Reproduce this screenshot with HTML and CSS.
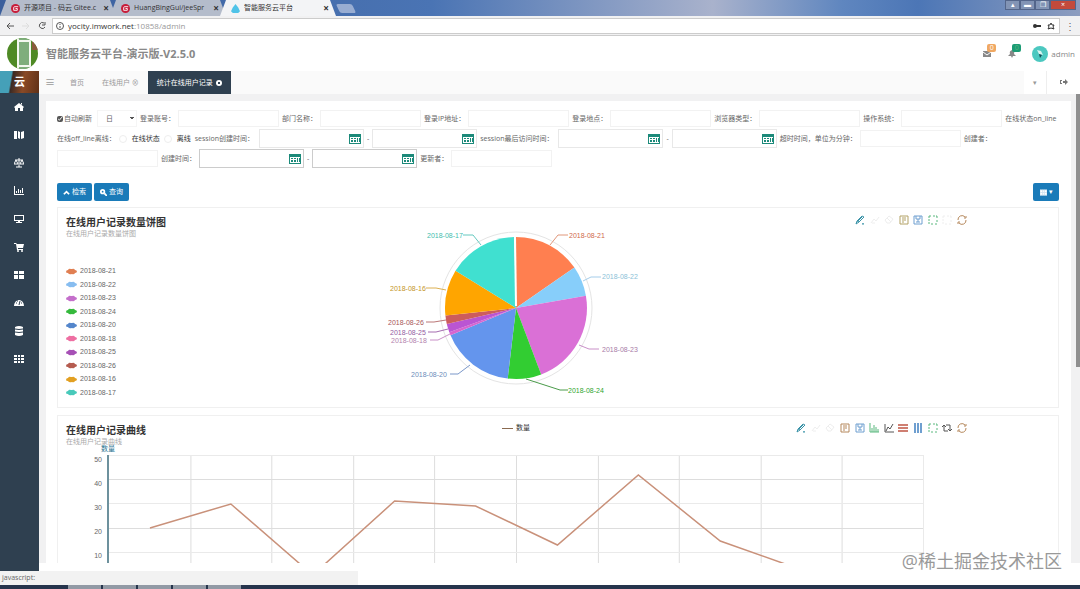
FILE: index.html
```html
<!DOCTYPE html>
<html lang="zh-CN">
<head>
    <meta charset="utf-8">
    <title>智能服务云平台</title>
    <link rel="stylesheet" href="styles.css">
</head>
<body>
    <svg class="defs" aria-hidden="true">
        <symbol id="i-pen" viewBox="0 0 10 10"><path d="M1 9l1-3 5-5 2 1-5 5zM2 6l2 1M3 6l4-4M7 9h2M8 8v1" /></symbol>
        <symbol id="i-undo" viewBox="0 0 10 10"><path d="M1 8l3-4 2 2 3-4M2 8h3" /></symbol>
        <symbol id="i-clear" viewBox="0 0 10 10"><path d="M1 5l4-4 4 3-3 4H3zM3 3l4 4" /></symbol>
        <symbol id="i-data" viewBox="0 0 10 10"><path d="M1 1h8v8H1zM3 3h4M3 5h4M3 7h2" /></symbol>
        <symbol id="i-save" viewBox="0 0 10 10"><path d="M1 1h8v8H1zM3 1v3h4V1M5 4v3M3 7h4" /></symbol>
        <symbol id="i-box" viewBox="0 0 10 10"><path d="M1 3V1h2M5 1h2M8 1h1v2M9 5v2M9 9H7M5 9H3M1 9V7M1 6V4" /></symbol>
        <symbol id="i-refresh" viewBox="0 0 10 10"><path d="M1 5a4 4 0 0 1 7-3M9 1v2H7M9 5a4 4 0 0 1-7 3M1 9V7h2" /></symbol>
        <symbol id="i-bar" viewBox="0 0 10 10"><path d="M1 0v9h9M3 9V5M5 9V2M7 9V4M9 9V6" /></symbol>
        <symbol id="i-line" viewBox="0 0 10 10"><path d="M1 1v8h9M2 8l2-4 2 2 3-5" /></symbol>
        <symbol id="i-rows" viewBox="0 0 10 10"><path d="M0 2h10M0 5h10M0 8h10" stroke-width="2" /></symbol>
        <symbol id="i-cols" viewBox="0 0 10 10"><path d="M2 0v10M5 0v10M8 0v10" stroke-width="2" /></symbol>
        <symbol id="i-swap" viewBox="0 0 10 10"><path d="M4 2h4v5M6 6l2 2 2-2M6 8H2V3M0 4l2-2 2 2" /></symbol>
        <symbol id="i-cal" viewBox="0 0 12 10"><path fill="#1c8a7a" d="M0 0h12v10H0z" /><path fill="#fff" d="M1 3h10v6H1z" /><path fill="#1c8a7a" d="M2 4h2v1H2zM5 4h2v1H5zM8 4h1v4H8zM2 6h2v2H2zM5 6h2v2H5zM10 4h1v4h-1z" /></symbol>
        <symbol id="i-gitee" viewBox="0 0 10 10"><circle cx="5" cy="5" r="5" fill="#c71d3a" /><path d="M8 3H4Q3 3 3 4v3h4V5H5" fill="none" stroke="#fff" /></symbol>
        <symbol id="i-car" viewBox="0 0 11 7"><path d="M0 4q0-2 2-2 1-2 3-1l1 0q2-1 3 1 2 0 2 2-1 1-2 1-1 2-3 1-3 1-4-1-2 0-2-1z" /></symbol>
    </svg>

    <div class="browser-tabs">
        <a class="browser-tab" href="#"><svg><use href="#i-gitee" /></svg><span>开源项目 - 码云 Gitee.c</span><b>×</b></a>
        <a class="browser-tab" href="#"><svg><use href="#i-gitee" /></svg><span>HuangBingGui/jeeSpr</span><b>×</b></a>
        <a class="browser-tab current" href="#"><svg viewBox="0 0 10 10"><path fill="#4fc3e8" d="M5 0l3 4 2 4-2 2H2L0 8l2-4z" /></svg><span>智能服务云平台</span><b>×</b></a>
        <i class="new-tab"></i>
        <div class="window-buttons">
            <button aria-label="用户">▴</button><button aria-label="最小化">▬</button><button aria-label="还原">❐</button><button class="close" aria-label="关闭">×</button>
        </div>
    </div>
    <div class="address-bar">
        <svg class="nav-icons" viewBox="0 0 50 14" fill="none" stroke="#555">
            <path d="M14 7H7M10 4L7 7l3 3" />
            <path stroke="#ddd" d="M22 7h7M26 4l3 3-3 3" />
            <path d="M44 4a3 3 0 1 0 1 4M45 3v3h-3" />
        </svg>
        <div class="url">
            <svg viewBox="0 0 8 8" fill="none" stroke="#555"><circle cx="4" cy="4" r="3.5" /><path d="M4 2v1M4 4v2" /></svg>
            <span>yocity.imwork.net<em>:10858/admin</em></span>
            <svg class="key" viewBox="0 0 8 8" fill="none" stroke="#333" stroke-width="2"><circle cx="2" cy="4" r="1" /><path d="M3 4h5" /></svg>
            <svg viewBox="0 0 8 8" fill="none" stroke="#333"><path d="M4 1l1 2h2L6 5l1 2-3-1-3 1 1-2-1-2h2z" /></svg>
        </div>
        <span class="dots">⋮</span>
    </div>

    <header>
        <svg class="logo" viewBox="0 0 31 31">
            <clipPath id="round"><circle cx="15.5" cy="15.5" r="15.5" /></clipPath>
            <g clip-path="url(#round)">
                <path fill="#4f8a25" d="M0 0h31v31H0z" />
                <path fill="#7fae7c" d="M12 0h12v31H12z" />
                <path fill="#8a5a3c" d="M25 0h6v12h-6z" />
                <path stroke="#f4f8f0" stroke-width="2" d="M11 0v31M23 0v31M11 3h12M11 28h12" />
            </g>
        </svg>
        <h1>智能服务云平台-演示版-V2.5.0</h1>
        <a class="notice" href="#" aria-label="消息">
            <svg viewBox="0 0 10 8"><path fill="#888" d="M1 1h8v6H1z" /><path stroke="#fff" fill="none" d="M1 2l4 3 4-3" /></svg>
            <span class="badge">0</span>
        </a>
        <a class="notice" href="#" aria-label="提醒">
            <svg viewBox="0 0 10 8"><path fill="#888" d="M5 0q3 1 2 4l2 2H6L5 8 4 6H1l2-2Q2 1 5 0z" /></svg>
            <span class="badge green">0</span>
        </a>
        <a class="user" href="#">
            <svg viewBox="0 0 16 16"><circle cx="8" cy="8" r="8" fill="#4cc8c0" /><path fill="#d9f4f0" d="M5 4l4 1 2 4-4-1z" /><path fill="#174a55" d="M7 8l3 1-2 3z" /></svg>
            admin
        </a>
    </header>

    <div class="main">
        <aside>
            <div class="brand">云</div>
            <nav>
                <a href="#" aria-label="主页"><svg viewBox="0 0 10 10"><path d="M5 1l5 4-1 1v3H6V6H4v3H1V6L0 5zM7 1h1v2L7 2z" /></svg></a>
                <a href="#" aria-label="地图"><svg viewBox="0 0 10 10"><path d="M0 1l3 0v8l-3 0zM4 1l2 1v7L4 8zM7 2l3-1v7L7 9z" /></svg></a>
                <a href="#" aria-label="权限"><svg viewBox="0 0 10 10"><path fill="none" stroke="#fff" d="M5 0v9M2 9h6M1 2h8M2 2L0 6h4zM8 2L6 6h4z" /></svg></a>
                <a href="#" aria-label="统计"><svg viewBox="0 0 10 10"><path d="M0 0h1v8h9v1H0zM2 5h1v2H2zM4 3h1v4H4zM6 4h1v3H6zM8 2h1v5H8z" /></svg></a>
                <a href="#" aria-label="监控"><svg viewBox="0 0 10 10"><path d="M0 1h10v6H6v1h2v1H2V8h2V7H0z" /><path fill="#2f4050" d="M1 2h8v4H1z" /></svg></a>
                <a href="#" aria-label="购物"><svg viewBox="0 0 10 10"><path d="M0 1h2l1 1h7L9 6H4v1h5v1H3L2 2H0z" /><circle cx="4" cy="9" r="1" /><circle cx="8" cy="9" r="1" /></svg></a>
                <a href="#" aria-label="组件"><svg viewBox="0 0 10 10"><path d="M0 1h4v3H0zM5 1h5v3H5zM0 5h4v4H0zM5 5h5v4H5z" /></svg></a>
                <a href="#" aria-label="仪表"><svg viewBox="0 0 10 10"><path d="M0 8a5 6 0 1 1 10 0z" /><path stroke="#2f4050" d="M5 7l1-4M2 5h1M7 5h1M3 3h1" /></svg></a>
                <a href="#" aria-label="数据"><svg viewBox="0 0 10 10"><path d="M1 1q4-2 8 0v8q-4 2-8 0z" /><path stroke="#2f4050" fill="none" d="M1 3q4 1 8 0M1 6q4 1 8 0" /></svg></a>
                <a href="#" aria-label="表格"><svg viewBox="0 0 10 10"><path d="M0 1h3v2H0zM4 1h2v2H4zM7 1h3v2H7zM0 4h3v2H0zM4 4h2v2H4zM7 4h3v2H7zM0 7h3v2H0zM4 7h2v2H4zM7 7h3v2H7z" /></svg></a>
            </nav>
        </aside>

        <div class="page">
            <div class="page-tabs">
                <button class="bars" aria-label="菜单">≡</button>
                <a href="#">首页</a>
                <a href="#">在线用户 ⊗</a>
                <a class="active" href="#">统计在线用户记录 <svg viewBox="0 0 6 6"><circle cx="3" cy="3" r="3" fill="#fff" /><path stroke="#2f4050" d="M2 2l2 2M4 2L2 4" /></svg></a>
                <button class="tab-tool" aria-label="更多">▾</button>
                <button class="tab-tool exit" aria-label="退出"><svg viewBox="0 0 8 6"><path fill="#777" d="M0 1h2v1H1v2h1v1H0zM3 2h2V0l3 3-3 3V4H3z" /></svg></button>
            </div>

            <div class="content">
                <div class="box">
                    <form>
                        <div class="row">
                            <label class="auto"><input type="checkbox" checked>自动刷新</label>
                            <select aria-label="周期"><option>日</option></select>
                            <label for="account">登录账号：</label><input type="text" id="account">
                            <label for="dept">部门名称：</label><input type="text" id="dept">
                            <label for="ip">登录IP地址：</label><input type="text" id="ip">
                            <label for="place">登录地点：</label><input type="text" id="place">
                            <label for="agent">浏览器类型：</label><input type="text" id="agent">
                            <label for="os">操作系统：</label><input type="text" id="os">
                            <span>在线状态on_line</span>
                        </div>
                        <div class="row">
                            <span>在线off_line离线：</span>
                            <label class="radio"><input type="radio" name="state">在线状态</label>
                            <label class="radio"><input type="radio" name="state">离线</label>
                            <label for="made">session创建时间：</label>
                            <span class="date"><input type="text" id="made"><svg><use href="#i-cal" /></svg></span>-<span class="date"><input type="text" aria-label="session创建时间止"><svg><use href="#i-cal" /></svg></span>
                            <label for="last">session最后访问时间：</label>
                            <span class="date"><input type="text" id="last"><svg><use href="#i-cal" /></svg></span>-<span class="date"><input type="text" aria-label="session最后访问时间止"><svg><use href="#i-cal" /></svg></span>
                            <label for="timeout">超时时间，单位为分钟：</label><input type="text" id="timeout">
                            <label for="creator">创建者：</label>
                        </div>
                        <div class="row">
                            <input type="text" id="creator">
                            <label for="created">创建时间：</label>
                            <span class="date dark"><input type="text" id="created"><svg><use href="#i-cal" /></svg></span>-<span class="date dark"><input type="text" aria-label="创建时间止"><svg><use href="#i-cal" /></svg></span>
                            <label for="updater">更新者：</label><input type="text" id="updater">
                        </div>
                        <div class="buttons">
                            <button type="button"><svg viewBox="0 0 8 8"><path d="M1 6l3-3 3 3" /></svg>检索</button>
                            <button type="button"><svg viewBox="0 0 8 8"><circle cx="3" cy="3" r="2" /><path d="M5 5l3 3" /></svg>查询</button>
                            <button type="button" class="columns" aria-label="列"><svg viewBox="0 0 8 8"><path d="M0 1h8v6H0zM0 4h8M3 1v6M5 1v6" /></svg>▾</button>
                        </div>
                    </form>

                    <section class="panel">
                        <div class="chart">
                            <h2>在线用户记录数量饼图</h2>
                            <p>在线用户记录数量饼图</p>
                            <div class="toolbox">
                                <svg class="teal"><use href="#i-pen" /></svg>
                                <svg class="off"><use href="#i-undo" /></svg>
                                <svg class="off"><use href="#i-clear" /></svg>
                                <svg class="olive"><use href="#i-data" /></svg>
                                <svg class="blue"><use href="#i-save" /></svg>
                                <svg class="green"><use href="#i-box" /></svg>
                                <svg class="off"><use href="#i-box" /></svg>
                                <svg class="brown"><use href="#i-refresh" /></svg>
                            </div>
                            <ul class="legend">
                                <li><svg fill="#e07f52"><use href="#i-car" /></svg>2018-08-21</li>
                                <li><svg fill="#87bdf0"><use href="#i-car" /></svg>2018-08-22</li>
                                <li><svg fill="#c46fcb"><use href="#i-car" /></svg>2018-08-23</li>
                                <li><svg fill="#35b93c"><use href="#i-car" /></svg>2018-08-24</li>
                                <li><svg fill="#5486cb"><use href="#i-car" /></svg>2018-08-20</li>
                                <li><svg fill="#ee6fa2"><use href="#i-car" /></svg>2018-08-18</li>
                                <li><svg fill="#a650b5"><use href="#i-car" /></svg>2018-08-25</li>
                                <li><svg fill="#b55c50"><use href="#i-car" /></svg>2018-08-26</li>
                                <li><svg fill="#e2a022"><use href="#i-car" /></svg>2018-08-16</li>
                                <li><svg fill="#48c9ba"><use href="#i-car" /></svg>2018-08-17</li>
                            </ul>
                            <svg class="pie" viewBox="0 0 300 190">
                                <circle cx="150" cy="100" r="76" fill="none" stroke="#e4e4e4" />
                                <path fill="#ff7f50" d="M150 100V29A71 71 0 0 1 208.4 59.6z" />
                                <path fill="#87cefa" d="M150 100L208.4 59.6A71 71 0 0 1 219.9 87.7z" />
                                <path fill="#da70d6" d="M150 100L219.9 87.7A71 71 0 0 1 175.2 166.4z" />
                                <path fill="#32cd32" d="M150 100L175.2 166.4A71 71 0 0 1 141.7 170.5z" />
                                <path fill="#6495ed" d="M150 100L141.7 170.5A71 71 0 0 1 84.5 127.3z" />
                                <path fill="#d765cf" d="M150 100L84.5 127.3A71 71 0 0 1 83.3 124.3z" />
                                <path fill="#ba55d3" d="M150 100L83.3 124.3A71 71 0 0 1 80.8 116z" />
                                <path fill="#cd5c5c" d="M150 100L80.8 116A71 71 0 0 1 79.4 107.4z" />
                                <path fill="#ffa500" d="M150 100L79.4 107.4A71 71 0 0 1 89.5 62.8z" />
                                <path fill="#40e0d0" d="M150 100L89.5 62.8A71 71 0 0 1 148.2 29z" />
                                <path stroke="#fff" stroke-width="2" d="M149 29L150 98" />
                                <g fill="none">
                                    <path stroke="#e0977b" d="M184 37l8-10h10" />
                                    <path stroke="#a5cdea" d="M217 73l8-4h10" />
                                    <path stroke="#c990c8" d="M213 137l10 4h10" />
                                    <path stroke="#4b9c4b" d="M160 171l34 11h8" />
                                    <path stroke="#7b97c9" d="M104 157l-12 9h-8" />
                                    <path stroke="#c990c8" d="M84 126l-12 6h-8" />
                                    <path stroke="#a56db0" d="M82 121l-12 3h-8" />
                                    <path stroke="#b77" d="M80 112l-12 2h-8" />
                                    <path stroke="#dcb052" d="M80 82l-10-2H60" />
                                    <path stroke="#66c9bf" d="M115 37l-8-10H97" />
                                </g>
                                <g>
                                    <text x="203" y="30" fill="#d0694a">2018-08-21</text>
                                    <text x="236" y="71" fill="#8bbfd8">2018-08-22</text>
                                    <text x="236" y="144" fill="#a87ba8">2018-08-23</text>
                                    <text x="202" y="185" fill="#2fa52f">2018-08-24</text>
                                    <text x="45" y="169" fill="#6c8cba">2018-08-20</text>
                                    <text x="25" y="135" fill="#b37fae">2018-08-18</text>
                                    <text x="24" y="127" fill="#935d9f">2018-08-25</text>
                                    <text x="22" y="117" fill="#a85656">2018-08-26</text>
                                    <text x="24" y="83" fill="#c49526">2018-08-16</text>
                                    <text x="61" y="30" fill="#43bdae">2018-08-17</text>
                                </g>
                            </svg>
                        </div>
                    </section>

                    <section class="panel">
                        <div class="chart">
                            <h2>在线用户记录曲线</h2>
                            <p>在线用户记录曲线</p>
                            <div class="line-legend"><i></i>数量</div>
                            <div class="toolbox wide">
                                <svg class="teal"><use href="#i-pen" /></svg>
                                <svg class="off"><use href="#i-undo" /></svg>
                                <svg class="off"><use href="#i-clear" /></svg>
                                <svg class="brown"><use href="#i-data" /></svg>
                                <svg class="blue"><use href="#i-save" /></svg>
                                <svg class="green"><use href="#i-bar" /></svg>
                                <svg class="black"><use href="#i-line" /></svg>
                                <svg class="red"><use href="#i-rows" /></svg>
                                <svg class="blue"><use href="#i-cols" /></svg>
                                <svg class="green"><use href="#i-box" /></svg>
                                <svg class="black"><use href="#i-swap" /></svg>
                                <svg class="brown"><use href="#i-refresh" /></svg>
                            </div>
                            <div class="plot">
                                <b class="axis-name">数量</b>
                                <div class="y-axis"><span>50</span><span>40</span><span>30</span><span>20</span><span>10</span></div>
                                <svg viewBox="0 0 816 122" preserveAspectRatio="none">
                                    <path stroke="#ddd" d="M0 24.5h816M0 73.5h816M82 0v122M163 0v122M245 0v122M326 0v122M408 0v122M490 0v122M571 0v122M653 0v122M734 0v122" />
                                    <path stroke="#eaeaea" d="M0 .5h816M0 48.5h816M0 97.5h816M815.5 0v122" />
                                    <path stroke="#c9917a" stroke-width="1.5" d="M41 73L122 49 204 120 286 46 367 51 449 90 530 20 612 86 694 115 775 120" />
                                </svg>
                            </div>
                        </div>
                    </section>
                </div>
                <i class="scrollbar"></i>
            </div>
        </div>
    </div>
    <footer><span>javascript:</span></footer>
    <div class="taskbar"><i></i><i></i><i></i><i></i><i></i></div>
    <div class="watermark">@稀土掘金技术社区</div>
</body>
</html>
```
FILE: styles.css
```css
* {
    box-sizing: border-box;
}

body {
    display: flex;
    flex-direction: column;
    height: 100vh;
    margin: 0;
    overflow: hidden;
    font-family: "Open Sans", "Noto Sans CJK SC", sans-serif;
    font-size: 7px;
    line-height: 10px;
    color: #666;
    background: #fff;
}

a {
    color: inherit;
    text-decoration: none;
}

button, input, select {
    font: inherit;
    color: inherit;
    margin: 0;
    padding: 0;
    border: none;
    background: none;
}

svg {
    flex: none;
}

.defs {
    position: absolute;
    width: 0;
    height: 0;
}

/* browser window */
.browser-tabs {
    display: flex;
    flex: none;
    height: 16px;
    background: linear-gradient(to right, #3b5f9c, #4a74b4 40%, #a9b2cc 66%, #5f86bf 78%, #4c76b6 85%, #8d9dbf);
}

.browser-tab {
    display: flex;
    align-items: center;
    gap: 4px;
    width: 116px;
    margin-right: -6px;
    padding: 0 7px 0 11px;
    color: #333;
    background: #b4bccb;
    clip-path: polygon(6px 0, 110px 0, 100% 100%, 0 100%);
}

.browser-tab.current {
    background: #f3f4f6;
}

.browser-tab svg {
    width: 9px;
    height: 9px;
}

.browser-tab span {
    flex: 1;
    overflow: hidden;
    white-space: nowrap;
}

.browser-tab b {
    font-size: 10px;
}

.new-tab {
    width: 16px;
    height: 9px;
    margin: 4px 0 0 8px;
    background: #98add2;
    border-radius: 2px;
    transform: skewX(25deg);
}

.window-buttons {
    display: flex;
    height: 10px;
    margin-left: auto;
    margin-right: 4px;
    color: #fff;
}

.window-buttons button {
    width: 15px;
    line-height: 8px;
    background: #8294b5;
    border: 1px solid #53658a;
}

.window-buttons .close {
    width: 26px;
    background: #c34a3c;
}

.address-bar {
    display: flex;
    align-items: center;
    flex: none;
    height: 20px;
    background: #f1f1f2;
    border-bottom: 1px solid #ccc;
}

.nav-icons {
    width: 50px;
    height: 14px;
}

.url {
    display: flex;
    align-items: center;
    flex: 1;
    gap: 4px;
    height: 16px;
    margin-left: 2px;
    padding: 0 4px 0 3px;
    font-size: 8px;
    color: #333;
    background: #fff;
    border: 1px solid #ccc;
}

.url svg {
    width: 8px;
    height: 8px;
}

.url .key {
    margin-left: auto;
    margin-right: 2px;
}

.url em {
    font-style: normal;
    color: #999;
}

.dots {
    width: 20px;
    font-size: 10px;
    text-align: center;
}

/* page header */
header {
    display: flex;
    align-items: center;
    flex: none;
    height: 35px;
    padding: 0 5px 0 7px;
}

.logo {
    width: 31px;
    height: 31px;
}

h1 {
    flex: 1;
    margin: 0 0 0 8px;
    font-size: 11px;
    line-height: 16px;
    color: #888;
}

.notice {
    position: relative;
    width: 25px;
    height: 8px;
}

.notice svg {
    display: block;
    width: 10px;
    height: 8px;
}

.badge {
    position: absolute;
    left: 5px;
    top: -6px;
    width: 9px;
    height: 8px;
    line-height: 8px;
    text-align: center;
    color: #fff;
    background: #f0a862;
    border-radius: 2px;
}

.badge.green {
    background: #1c9c75;
}

.user {
    display: flex;
    align-items: center;
    gap: 3px;
    font-size: 8px;
    color: #888;
}

.user svg {
    width: 16px;
    height: 16px;
}

.main {
    display: flex;
    flex: 1;
    min-height: 0;
}

aside {
    width: 39px;
    background: #2f4050;
}

.brand {
    height: 22px;
    font-size: 11px;
    font-weight: bold;
    line-height: 22px;
    text-align: center;
    color: #fff;
    background: linear-gradient(100deg, #45a0b8 28%, #3b2a24 32%, #8a4a26 60%, #5f3017);
}

aside nav a {
    display: flex;
    align-items: center;
    justify-content: center;
    height: 28px;
    padding-right: 2px;
}

aside nav svg {
    width: 10px;
    height: 10px;
    fill: #fff;
}

.page {
    display: flex;
    flex: 1;
    flex-direction: column;
    min-width: 0;
    padding-bottom: 8px;
}

.page-tabs {
    display: flex;
    flex: none;
    height: 23px;
    line-height: 23px;
    color: #999;
    background: #fafafa;
}

.page-tabs .bars {
    width: 22px;
    font-size: 10px;
}

.page-tabs a {
    padding: 0 9px;
}

.page-tabs .active {
    display: flex;
    align-items: center;
    gap: 3px;
    color: #fff;
    background: #2f4050;
}

.page-tabs .active svg {
    width: 6px;
    height: 6px;
}

.tab-tool {
    width: 22px;
    margin-left: auto;
    background: #fff;
}

.tab-tool.exit {
    width: 34px;
    margin-left: 0;
    border-left: 1px solid #eee;
}

.tab-tool svg {
    width: 8px;
    height: 6px;
}

.content {
    display: flex;
    align-items: flex-start;
    flex: 1;
    min-height: 0;
    overflow: hidden;
    background: #f1f1f2;
}

.box {
    flex: 1;
    min-width: 0;
    margin: 7px 5px 0 7px;
    padding: 8px 12px 0 11px;
    background: #fff;
}

.scrollbar {
    width: 4px;
    height: 273px;
    background: #8f8f8f;
}

/* search form */
.row {
    display: flex;
    align-items: center;
    gap: 3px;
    height: 19px;
    margin-bottom: 1px;
    white-space: nowrap;
}

.row input[type="text"] {
    width: 101px;
    height: 17px;
    background: #fff;
    border: 1px solid #f2f2f2;
}

.row select {
    width: 40px;
    height: 17px;
    padding-left: 8px;
    appearance: none;
    border: 1px solid #f5f5f5;
    background: linear-gradient(45deg, transparent 50%, #555 50%) 32px 6px / 2px 3px no-repeat,
        linear-gradient(-45deg, transparent 50%, #555 50%) 34px 6px / 2px 3px no-repeat;
}

.auto, .radio {
    display: flex;
    align-items: center;
    gap: 1px;
}

.auto input {
    width: 6px;
    height: 6px;
    accent-color: #555;
}

.auto {
    margin-right: 2px;
}

.radio {
    gap: 5px;
    margin-right: 1px;
    color: #333;
}

.radio input {
    appearance: none;
    width: 8px;
    height: 8px;
    border: 1px solid #eee;
    border-radius: 50%;
}

.date {
    position: relative;
    margin-left: 2px;
}

.date.dark, .row .date + .date {
    margin-left: 0;
}

.row .date input {
    display: block;
    width: 105px;
    height: 19px;
    border-color: #e8e8e8;
}

.row .date.dark input {
    border-color: #ccc;
}

.date svg {
    position: absolute;
    right: 3px;
    top: 5px;
    width: 12px;
    height: 10px;
}

.buttons {
    display: flex;
    gap: 2px;
    margin: 15px 0 6px;
}

.buttons button {
    display: flex;
    align-items: center;
    justify-content: center;
    gap: 2px;
    width: 35px;
    height: 18px;
    color: #fff;
    background: #1a7bb9;
    border-radius: 2px;
}

.buttons svg {
    width: 7px;
    height: 7px;
    fill: none;
    stroke: #fff;
    stroke-width: 2;
}

.buttons .columns {
    width: 26px;
    margin-left: auto;
}

.buttons .columns svg {
    fill: #fff;
    stroke: #cfe2f0;
    stroke-width: 1;
}

/* charts */
.panel {
    height: 201px;
    margin-bottom: 7px;
    border: 1px solid #f0f0f0;
}

.chart {
    position: relative;
    width: calc(100% - 84px);
    height: 100%;
    padding: 7px 8px 0;
}

h2 {
    margin: 0;
    font-size: 10px;
    line-height: 14px;
    color: #333;
}

.chart p {
    margin: 0;
    line-height: 9px;
    color: #aaa;
}

.toolbox {
    position: absolute;
    top: 7px;
    right: 7px;
    display: flex;
    justify-content: space-between;
    width: 112px;
}

.toolbox.wide {
    width: 171px;
}

.toolbox svg {
    width: 10px;
    height: 10px;
    fill: none;
    stroke: currentColor;
}

.teal { color: #3b93a8; }
.off { color: #eee; }
.olive { color: #b3a266; }
.blue { color: #6f9fd0; }
.green { color: #5ab87e; }
.brown { color: #b5885c; }
.red { color: #cf7f72; }
.black { color: #555; }

.legend {
    display: flex;
    flex-direction: column;
    justify-content: space-between;
    height: 132px;
    margin: 28px 0 0;
    padding: 0;
    font-family: "Liberation Sans", sans-serif;
    list-style: none;
}

.legend li {
    display: flex;
    align-items: center;
    gap: 3px;
}

.legend svg {
    width: 11px;
    height: 7px;
}

.pie {
    position: absolute;
    top: 0;
    left: calc(50% - 150px);
    width: 300px;
    height: 190px;
    font-family: "Liberation Sans", sans-serif;
}

.line-legend {
    position: absolute;
    top: 7px;
    left: 0;
    right: 0;
    display: flex;
    align-items: center;
    justify-content: center;
    gap: 3px;
    color: #333;
}

.line-legend i {
    width: 11px;
    height: 1px;
    background: #8a6a50;
}

.plot {
    position: relative;
    display: flex;
    height: 122px;
    margin: 9px 42px 0 20px;
}

.axis-name {
    position: absolute;
    left: 15px;
    top: -10px;
    line-height: 8px;
    font-weight: normal;
    color: #27718f;
}

.y-axis {
    display: flex;
    flex-direction: column;
    gap: 14px;
    width: 23px;
    padding-right: 5px;
    font-family: "Liberation Sans", sans-serif;
    text-align: right;
    border-right: 2px solid #6d919d;
}

.plot svg {
    flex: 1;
    min-width: 0;
    height: 122px;
    fill: none;
}

/* status line and taskbar */
footer {
    flex: none;
    height: 14px;
}

footer span {
    display: block;
    width: 358px;
    padding-left: 2px;
    line-height: 14px;
    background: #f2f2f2;
}

.taskbar {
    display: flex;
    flex: none;
    gap: 2px;
    height: 4px;
    padding-left: 68px;
    background: #26344c;
}

.taskbar i {
    width: 33px;
    background: #929aa5;
}

.watermark {
    position: absolute;
    right: 18px;
    bottom: 16px;
    font-size: 18px;
    line-height: 24px;
    color: #999;
    text-shadow: 0 0 1px #fff;
}
```
